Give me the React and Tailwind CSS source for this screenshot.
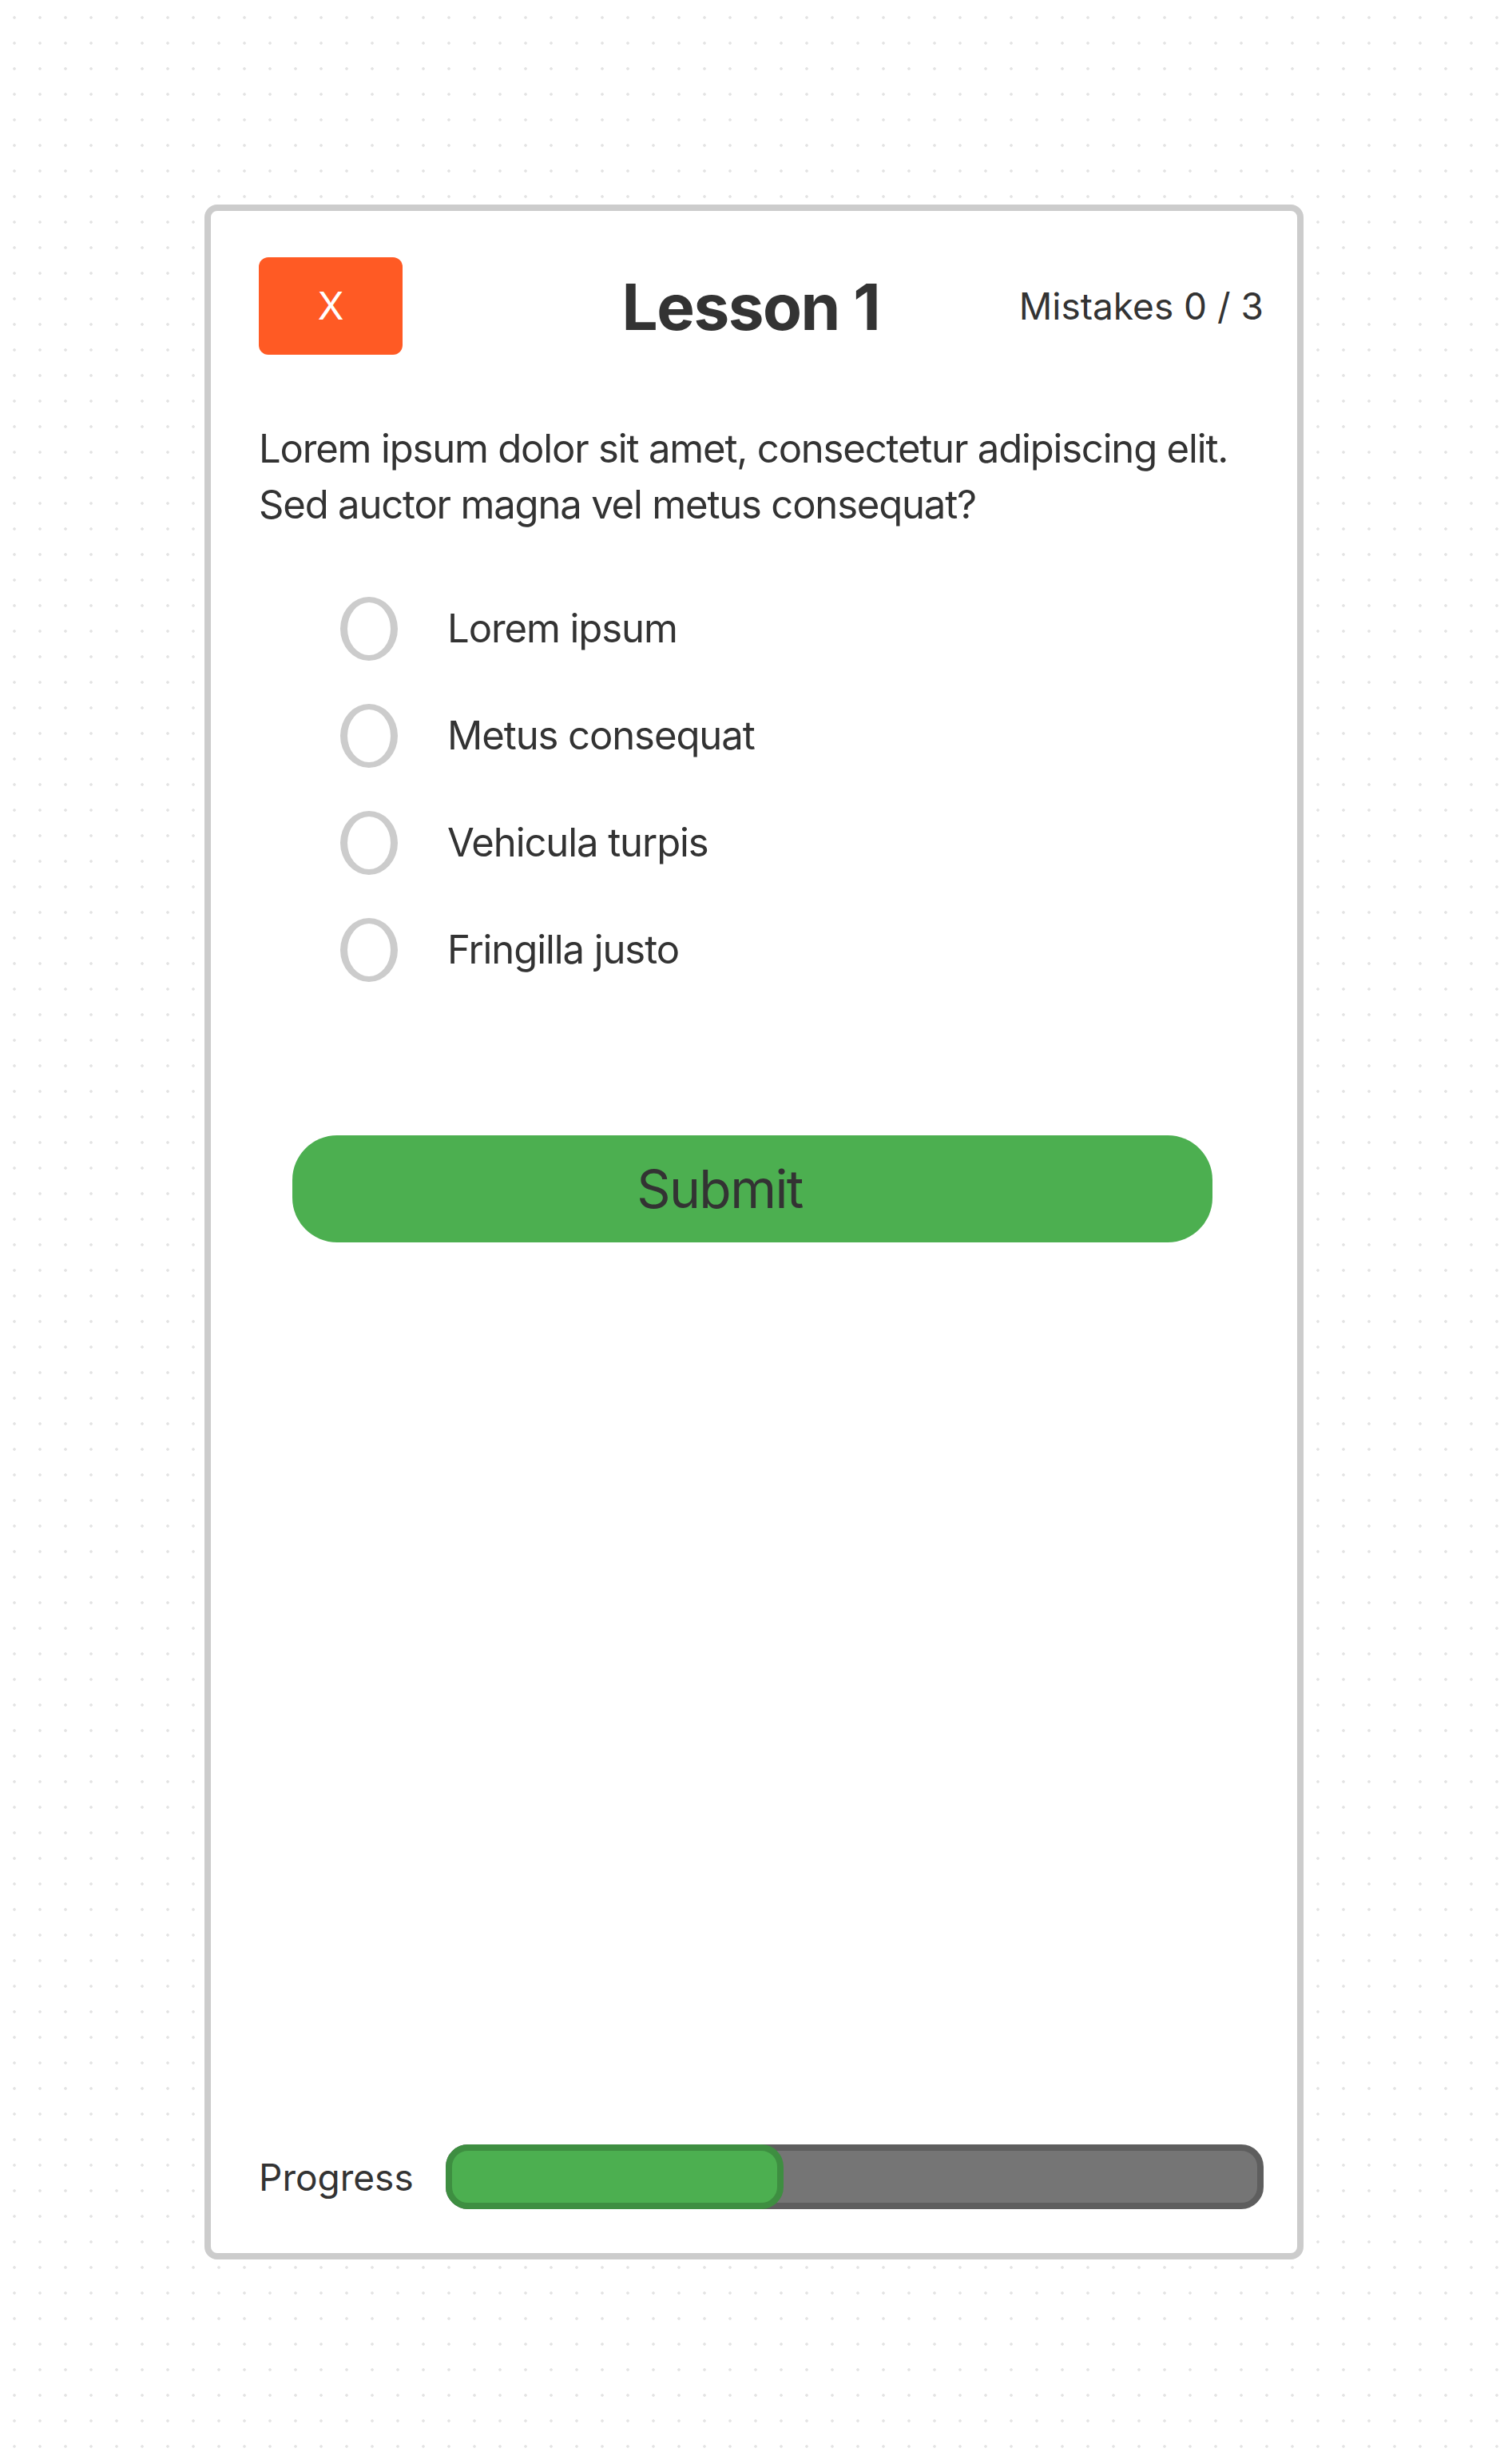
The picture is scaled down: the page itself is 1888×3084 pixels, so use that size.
export default function App() {
  const options = ["Lorem ipsum", "Metus consequat", "Vehicula turpis", "Fringilla justo"];
  return (
    <div className="min-h-screen w-full bg-white bg-[radial-gradient(circle,#e3e3e3_1.4px,transparent_2.2px)] bg-[length:32px_32px] bg-[position:2px_6px] pt-[256px] pb-[256px] font-['Inter','Noto_Sans',sans-serif] text-[#333333]">
      <div className="mx-auto flex h-[2572px] w-[1376px] flex-col rounded-[16px] border-8 border-[#cccccc] bg-white pt-[58px] pl-[60px] pr-[42px] pb-[55px]">
        <div className="flex h-[122px] items-center">
          <button className="flex h-[122px] w-[180px] items-center justify-center rounded-[12px] bg-[#ff5a24] text-[48px] leading-none text-white">
            X
          </button>
          <h1 className="flex-1 pl-[100px] text-center text-[80px] font-bold leading-[97px] tracking-[-0.019em]">Lesson 1</h1>
          <span className="text-[46px] leading-[56px]">Mistakes 0 / 3</span>
        </div>

        <p className="mt-[83px] text-[49px] leading-[70px] tracking-[-0.024em]">
          Lorem ipsum dolor sit amet, consectetur adipiscing elit.
          <br />
          Sed auctor magna vel metus consequat?
        </p>

        <div className="mt-[80px] flex flex-col gap-[54px] pl-[102px]">
          {options.map((o) => (
            <label key={o} className="flex h-[80px] items-center">
              <span className="block h-[80px] w-[72px] shrink-0 rounded-[50%] border-x-[9px] border-y-[7px] border-[#cccccc]" />
              <span className="ml-[62px] text-[49px] leading-[60px] tracking-[-0.022em]">{o}</span>
            </label>
          ))}
        </div>

        <button className="mt-[192px] ml-[42px] flex h-[134px] w-[1152px] items-center justify-center rounded-[56px] bg-[#4caf50] pr-[82px] text-[66px] leading-none tracking-[-0.024em] text-[#333333]">
          Submit
        </button>

        <div className="mt-auto flex h-[81px] items-center">
          <span className="text-[46px] leading-[56px]">Progress</span>
          <div className="ml-auto flex h-[81px] w-[1024px] rounded-[28px] border-8 border-[#5e5e5e] bg-[#757575]">
            <div className="-m-[8px] h-[81px] w-[423px] shrink-0 rounded-[28px] border-8 border-[#3e8e41] bg-[#4caf50]" />
          </div>
        </div>
      </div>
    </div>
  );
}
